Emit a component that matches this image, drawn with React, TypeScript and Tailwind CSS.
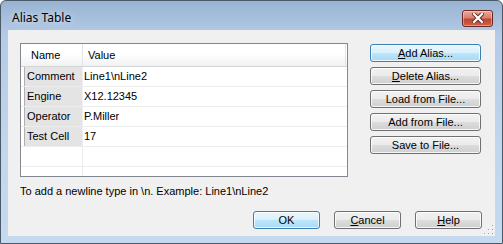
import React from "react";

const rows = [
  { name: "Comment", value: "Line1\\nLine2" },
  { name: "Engine", value: "X12.12345" },
  { name: "Operator", value: "P.Miller" },
  { name: "Test Cell", value: "17" },
];

const btnBase =
  "flex items-center justify-center rounded-[3px] border text-[11px] leading-none text-black shadow-[inset_0_0_0_1px_rgba(255,255,255,0.8)]";
const btnNormal =
  "border-[#707070] bg-[linear-gradient(to_bottom,#f2f2f2_0%,#ebebeb_50%,#dddddd_50%,#cfcfcf_100%)]";
const btnBlue =
  "border-[#3c7fb1] bg-[linear-gradient(to_bottom,#eaf6fd_0%,#d9f0fc_50%,#bee6fd_50%,#a7d9f5_100%)]";

function Btn({ children, blue, wide }: { children: React.ReactNode; blue?: boolean; wide?: boolean }) {
  return (
    <div className={`${btnBase} ${blue ? btnBlue : btnNormal} ${wide ? "w-[111px]" : "w-[67px]"} h-[18px]`}>
      <span>{children}</span>
    </div>
  );
}

export default function App() {
  return (
    <div
      className="w-[503px] h-[244px] flex flex-col rounded-t-[6px] border border-[#4a5868] bg-[linear-gradient(to_bottom,#98b3d2_0%,#b4cbe6_14%,#c2d6ec_60%,#c6daef_100%)]"
      style={{ fontFamily: '"Liberation Sans", Arial, sans-serif' }}
    >
      {/* title bar */}
      <div className="h-[29px] flex items-center justify-between pl-[11px] pr-[9px]">
        <span className="text-[12px] text-black pt-[4px]" style={{ fontFamily: '"Noto Sans", "Open Sans", sans-serif', textShadow: "0 0 6px rgba(255,255,255,0.9)" }}>
          Alias Table
        </span>
        <div className="mt-[5px] w-[31px] h-[17px] rounded-[3px] border border-[#6e2a22] flex items-center justify-center bg-[linear-gradient(to_bottom,#e9a99c_0%,#d9806f_45%,#c2452f_55%,#d0624c_100%)] shadow-[inset_0_0_0_1px_rgba(255,255,255,0.35)]">
          <svg width="12" height="10" viewBox="0 0 12 10">
            <path d="M2 1 L10 9 M10 1 L2 9" stroke="#5a2a24" strokeWidth="4" strokeLinecap="square" />
            <path d="M2 1 L10 9 M10 1 L2 9" stroke="#ffffff" strokeWidth="2.2" strokeLinecap="square" />
          </svg>
        </div>
      </div>

      {/* client */}
      <div className="relative mx-[7px] mb-[7px] flex-1 bg-[#f0f0f0] flex flex-col pl-[12px] pt-[13px]">
        <div className="flex">
          <div className="w-[328px] h-[134px] border border-[#828790] bg-white overflow-hidden flex flex-col">
            <div className="h-[23px] shrink-0 flex border-b border-[#d5d5d5] bg-[linear-gradient(to_bottom,#ffffff_0%,#ffffff_45%,#f1f2f4_100%)] text-[11px]">
              <div className="w-[62px] border-r border-[#e3e4e6] pl-[10px] flex items-center">Name</div>
              <div className="flex-1 pl-[5px] flex items-center border-r border-[#e3e4e6] mr-[1px]">Value</div>
            </div>
            {rows.map((r) => (
              <div key={r.name} className="h-[20px] shrink-0 flex border-b border-[#ececec] text-[11px]">
                <div className="w-[4px] border-r border-[#b0b0b0]" />
                <div className="w-[58px] bg-[#e4e4e4] border-r border-[#f0f0f0] pl-[2px] flex items-center">{r.name}</div>
                <div className="flex-1 pl-[1px] flex items-center">{r.value}</div>
              </div>
            ))}
            {[0, 1].map((i) => (
              <div key={i} className="h-[20px] shrink-0 flex border-b border-[#ececec]">
                <div className="w-[62px] border-r border-[#ececec]" />
                <div className="flex-1" />
              </div>
            ))}
          </div>

          <div className="ml-[22px] mt-[1px] flex flex-col gap-[5px]">
            <Btn wide blue>
              <span className="underline">A</span>dd Alias...
            </Btn>
            <Btn wide>
              <span className="underline">D</span>elete Alias...
            </Btn>
            <Btn wide>Load from File...</Btn>
            <Btn wide>Add from File...</Btn>
            <Btn wide>Save to File...</Btn>
          </div>
        </div>

        <div className="mt-[8px] h-[13px] text-[11px] leading-[13px] text-black">
          {"To add a newline type in \\n. Example: Line1\\nLine2"}
        </div>

        <div className="mt-[13px] flex justify-end gap-[14px] pr-[13px]">
          <Btn blue>OK</Btn>
          <Btn>
            <span className="underline">C</span>ancel
          </Btn>
          <Btn>
            <span className="underline">H</span>elp
          </Btn>
        </div>

        {/* size grip */}
        <svg className="absolute right-0 bottom-0" width="12" height="12" viewBox="0 0 12 12">
          {[
            [10, 2], [10, 6], [6, 6], [10, 10], [6, 10], [2, 10],
          ].map(([x, y], i) => (
            <g key={i}>
              <rect x={x} y={y} width="1" height="1" fill="#ffffff" />
              <rect x={x - 1} y={y - 1} width="1" height="1" fill="#a0a0a0" />
            </g>
          ))}
        </svg>
      </div>
    </div>
  );
}
